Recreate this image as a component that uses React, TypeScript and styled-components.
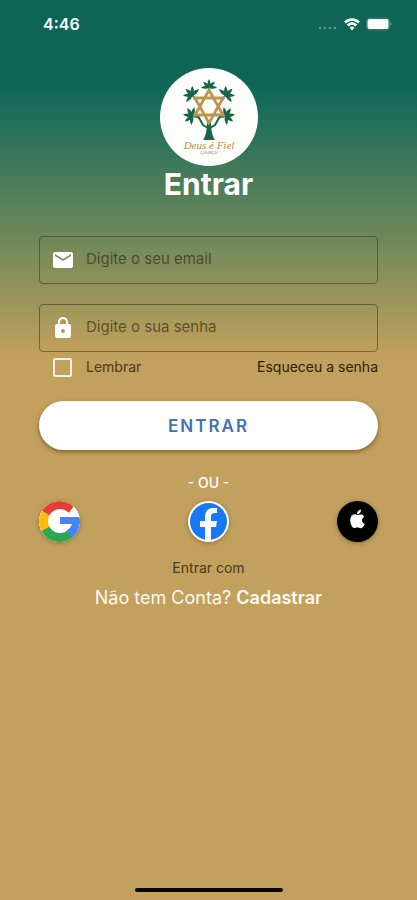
import React, { useState } from "react";
import styled, { createGlobalStyle } from "styled-components";

const GlobalStyle = createGlobalStyle`
  * { box-sizing: border-box; }
  body { margin: 0; font-family: Inter, "Liberation Sans", sans-serif; }
  button, input { font-family: inherit; }
`;

const Page = styled.div`
  min-height: 100vh;
  display: flex;
  flex-direction: column;
  background: #c2a05d linear-gradient(#0e6556 0, #0e6556 84px, #1c6d5b 112px, #6b8759 232px, #c2a05d 356px) no-repeat;
`;

const StatusBar = styled.header`
  display: flex;
  align-items: center;
  justify-content: space-between;
  height: 48px;
  padding: 0 25px 0 43px;
  color: #f2fbf9;
`;

const Clock = styled.time`
  font-size: 16px;
  line-height: 20px;
  font-weight: 600;
`;

const StatusIcons = styled.div`
  display: flex;
  align-items: center;
  gap: 6px;
`;

const Content = styled.main`
  flex: 1;
  display: flex;
  flex-direction: column;
  padding: 20px 39px 0;
`;

const Brand = styled.div`
  align-self: center;
  width: 98px;
  height: 98px;
  border-radius: 50%;
  background: #fefefd;
  svg { display: block; }
`;

const Title = styled.h1`
  margin: 0;
  text-align: center;
  color: #fff;
  font-size: 30px;
  line-height: 36px;
  font-weight: 700;
`;

const Form = styled.form`
  display: flex;
  flex-direction: column;
  margin-top: 34px;
`;

const Field = styled.label`
  display: flex;
  align-items: center;
  gap: 11px;
  height: 48px;
  margin-bottom: 20px;
  padding: 0 11px;
  border: 1px solid rgba(45, 45, 15, 0.5);
  border-radius: 4px;
  svg { flex: none; }
  & + & { margin-bottom: 4px; }
`;

const TextInput = styled.input`
  flex: 1;
  min-width: 0;
  padding: 0 0 2px;
  border: 0;
  outline: 0;
  background: transparent;
  color: #2d2b18;
  font-size: 15px;
  line-height: 20px;
  &::placeholder { color: rgba(40, 30, 5, 0.62); opacity: 1; }
`;

const Options = styled.div`
  display: flex;
  align-items: center;
  justify-content: space-between;
  height: 22px;
  font-size: 14px;
  line-height: 16px;
`;

const Remember = styled.label`
  display: flex;
  align-items: center;
  gap: 14px;
  padding-left: 14px;
  color: #4c3a18;
`;

const Checkbox = styled.input`
  appearance: none;
  width: 19px;
  height: 19px;
  margin: 0;
  border: 2px solid #fdf3e2;
  border-radius: 2px;
  &:checked { background: #0e6556; }
`;

const ForgotLink = styled.a`
  color: #2b1d06;
  text-decoration: none;
`;

const SubmitButton = styled.button`
  height: 49px;
  margin-top: 23px;
  border: 0;
  border-radius: 25px;
  background: #fff;
  color: #4373ac;
  font-size: 17px;
  line-height: 24px;
  font-weight: 600;
  letter-spacing: 2px;
  box-shadow: 0 2px 4px rgba(60, 40, 0, 0.5);
`;

const Divider = styled.p`
  margin: 23px 0 8px;
  color: #fff;
  text-align: center;
  font-size: 14px;
  line-height: 20px;
  font-weight: 500;
`;

const SocialRow = styled.div`
  display: flex;
  justify-content: space-between;
`;

const SocialButton = styled.button<{ $fill: string }>`
  width: 41px;
  height: 41px;
  padding: 0;
  border: 0;
  border-radius: 50%;
  overflow: hidden;
  background: ${({ $fill }) => $fill};
  box-shadow: 0 1px 4px rgba(60, 40, 0, 0.4);
  svg { display: block; }
`;

const Caption = styled.p`
  margin: 16px 0 8px;
  color: #4c3a18;
  text-align: center;
  font-size: 14px;
  line-height: 20px;
`;

const SignUpLink = styled.a`
  align-self: center;
  color: #fffaf0;
  text-decoration: none;
  font-size: 18px;
  line-height: 24px;
  strong { font-weight: 600; }
`;

const HomeBar = styled.div`
  align-self: center;
  width: 148px;
  height: 4px;
  margin-bottom: 8px;
  border-radius: 2px;
  background: #080500;
`;

const leafAngles = [-95, -48, 0, 48, 95];

function LeafSprig({ x, y, turn, size = 1 }: { x: number; y: number; turn: number; size?: number }) {
  return (
    <g transform={`translate(${x} ${y}) rotate(${turn}) scale(${size})`}>
      {leafAngles.map((angle) => (
        <path key={angle} transform={`rotate(${angle})`} d="M0 1C-2.6-2-2.4-6 0-10C2.4-6 2.6-2 0 1Z" />
      ))}
      <path d="M-1 0H1V8H-1Z" />
    </g>
  );
}

function TreeLogo() {
  return (
    <svg width="98" height="98" viewBox="0 0 98 98" role="img" aria-label="Deus é Fiel Church">
      <g fill="#146647">
        <LeafSprig x={49} y={19} turn={0} size={0.8} />
        <LeafSprig x={32} y={27} turn={-45} size={0.9} />
        <LeafSprig x={66} y={27} turn={45} size={0.9} />
        <LeafSprig x={32} y={48} turn={-80} size={0.9} />
        <LeafSprig x={66} y={48} turn={80} size={0.9} />
        <path d="M47 53H51C51 62 52 68 55 72H43C46 68 47 62 47 53Z" />
      </g>
      <path fill="none" stroke="#146647" strokeWidth="2" d="M38 48L43 57L48 60M60 48L55 57L50 60M34 30L37 33M64 30L61 33" />
      <path d="M49 22L63 47H35Z M49 55L35 30H63Z" fill="#fefefd" />
      <path d="M49 22L63 47H35Z M49 55L35 30H63Z" fill="none" stroke="#bd954e" strokeWidth="2.8" />
      <text x="49" y="81" textAnchor="middle" fontFamily="Liberation Serif, serif" fontStyle="italic" fontSize="11" fill="#b88b48">Deus é Fiel</text>
      <text x="49" y="86" textAnchor="middle" fontFamily="Inter, sans-serif" fontSize="4" fill="#6d8c7c">CHURCH</text>
    </svg>
  );
}

function StatusSymbols() {
  return (
    <StatusIcons>
      <svg width="20" height="14" viewBox="0 0 20 14" fill="#5a9c8f" aria-hidden="true">
        <circle cx="2" cy="11" r="1.3" /><circle cx="7" cy="11" r="1.3" /><circle cx="12" cy="11" r="1.3" /><circle cx="17" cy="11" r="1.3" />
      </svg>
      <svg width="16" height="13" viewBox="0 0 16 13" fill="none" stroke="#f2fbf9" strokeWidth="2.6" aria-hidden="true">
        <path d="M1 4.5C5 .4 11 .4 15 4.5M3.6 7.5C6.3 4.9 9.7 4.9 12.4 7.5" />
        <path d="M5.5 9.5Q8 7.6 10.5 9.5L8 12.5Z" fill="#f2fbf9" stroke="none" />
      </svg>
      <svg width="26" height="14" viewBox="0 0 26 14" aria-hidden="true">
        <rect x=".5" y="1" width="23" height="12" rx="3.5" fill="none" stroke="#3d8578" />
        <rect x="1.5" y="2" width="21" height="10" rx="2" fill="#fff" />
        <path d="M24.5 5Q26.5 7 24.5 9Z" fill="#80b1a9" />
      </svg>
    </StatusIcons>
  );
}

function MailIcon() {
  return (
    <svg width="24" height="24" viewBox="0 0 24 24" fill="#fff" aria-hidden="true">
      <path d="M20 4H4C2.9 4 2 4.9 2 6v12c0 1.1.9 2 2 2h16c1.1 0 2-.9 2-2V6c0-1.1-.9-2-2-2zm0 4-8 5-8-5V6l8 5 8-5z" />
    </svg>
  );
}

function LockIcon() {
  return (
    <svg width="24" height="24" viewBox="0 0 24 24" fill="#fff" aria-hidden="true">
      <path d="M18 8h-1V6c0-2.76-2.24-5-5-5S7 3.24 7 6v2H6c-1.1 0-2 .9-2 2v10c0 1.1.9 2 2 2h12c1.1 0 2-.9 2-2V10c0-1.1-.9-2-2-2zm-6 9c-1.1 0-2-.9-2-2s.9-2 2-2 2 .9 2 2-.9 2-2 2zm3.1-9H8.9V6c0-1.71 1.39-3.1 3.1-3.1s3.1 1.39 3.1 3.1z" />
    </svg>
  );
}

function GoogleMark() {
  return (
    <svg width="41" height="41" viewBox="0 0 41 41" aria-hidden="true">
      <path fill="#fff" d="M0 0H41V41H0Z" />
      <path fill="#e63e35" d="M3 10L0 0H34V7L29 13L20 20Z" />
      <path fill="#fbbc05" d="M3 10L0 8V33L3 31L20 20Z" />
      <path fill="#2da552" d="M3 30L0 41H34V35L28 27L20 20Z" />
      <circle cx="21" cy="20" r="12" fill="#fff" />
      <path fill="#fff" d="M35 5L41 8V16H27Z" />
      <path fill="#4285f4" d="M21 16H41V41H34V36L27 30C30 28 32 26 33 23H21Z" />
    </svg>
  );
}

function FacebookMark() {
  return (
    <svg width="41" height="41" viewBox="0 0 41 41" aria-hidden="true">
      <circle cx="20.5" cy="20.5" r="18.5" fill="#1877f2" />
      <path fill="#fff" d="M17 40V26H12V20H17V16C17 10 20 7 26 7H29V12H27C24 12 23 13 23 16V20H29L28 26H23V40Z" />
    </svg>
  );
}

function AppleMark() {
  return (
    <svg width="41" height="41" viewBox="0 0 41 41" fill="#fff" aria-hidden="true">
      <path d="M20.5 14.1C22 14.1 24.5 12.3 27.3 15.4C24 17.6 24.4 21.4 27.8 23C26 27 24.2 27.8 22 26.7Q20.4 26 18.7 26.7C13.7 29 10.4 14.4 17 13.4C18.5 13.2 19.5 14.1 20.5 14.1ZM20.1 13.2C19.8 10.7 21.8 8.7 24 8.5C24.2 11.4 22.3 13.2 20.1 13.2Z" />
    </svg>
  );
}

export default function App() {
  const [remember, setRemember] = useState(false);
  return (
    <Page>
      <GlobalStyle />
      <StatusBar>
        <Clock>4:46</Clock>
        <StatusSymbols />
      </StatusBar>
      <Content>
        <Brand><TreeLogo /></Brand>
        <Title>Entrar</Title>
        <Form onSubmit={(event) => event.preventDefault()}>
          <Field>
            <MailIcon />
            <TextInput type="email" placeholder="Digite o seu email" aria-label="Email" />
          </Field>
          <Field>
            <LockIcon />
            <TextInput type="password" placeholder="Digite o sua senha" aria-label="Senha" />
          </Field>
          <Options>
            <Remember>
              <Checkbox type="checkbox" checked={remember} onChange={(event) => setRemember(event.target.checked)} />
              Lembrar
            </Remember>
            <ForgotLink href="#senha">Esqueceu a senha</ForgotLink>
          </Options>
          <SubmitButton type="submit">ENTRAR</SubmitButton>
        </Form>
        <Divider>- OU -</Divider>
        <SocialRow>
          <SocialButton type="button" $fill="#fff" aria-label="Google"><GoogleMark /></SocialButton>
          <SocialButton type="button" $fill="#fff" aria-label="Facebook"><FacebookMark /></SocialButton>
          <SocialButton type="button" $fill="#000" aria-label="Apple"><AppleMark /></SocialButton>
        </SocialRow>
        <Caption>Entrar com</Caption>
        <SignUpLink href="#cadastro">Não tem Conta? <strong>Cadastrar</strong></SignUpLink>
      </Content>
      <HomeBar />
    </Page>
  );
}
